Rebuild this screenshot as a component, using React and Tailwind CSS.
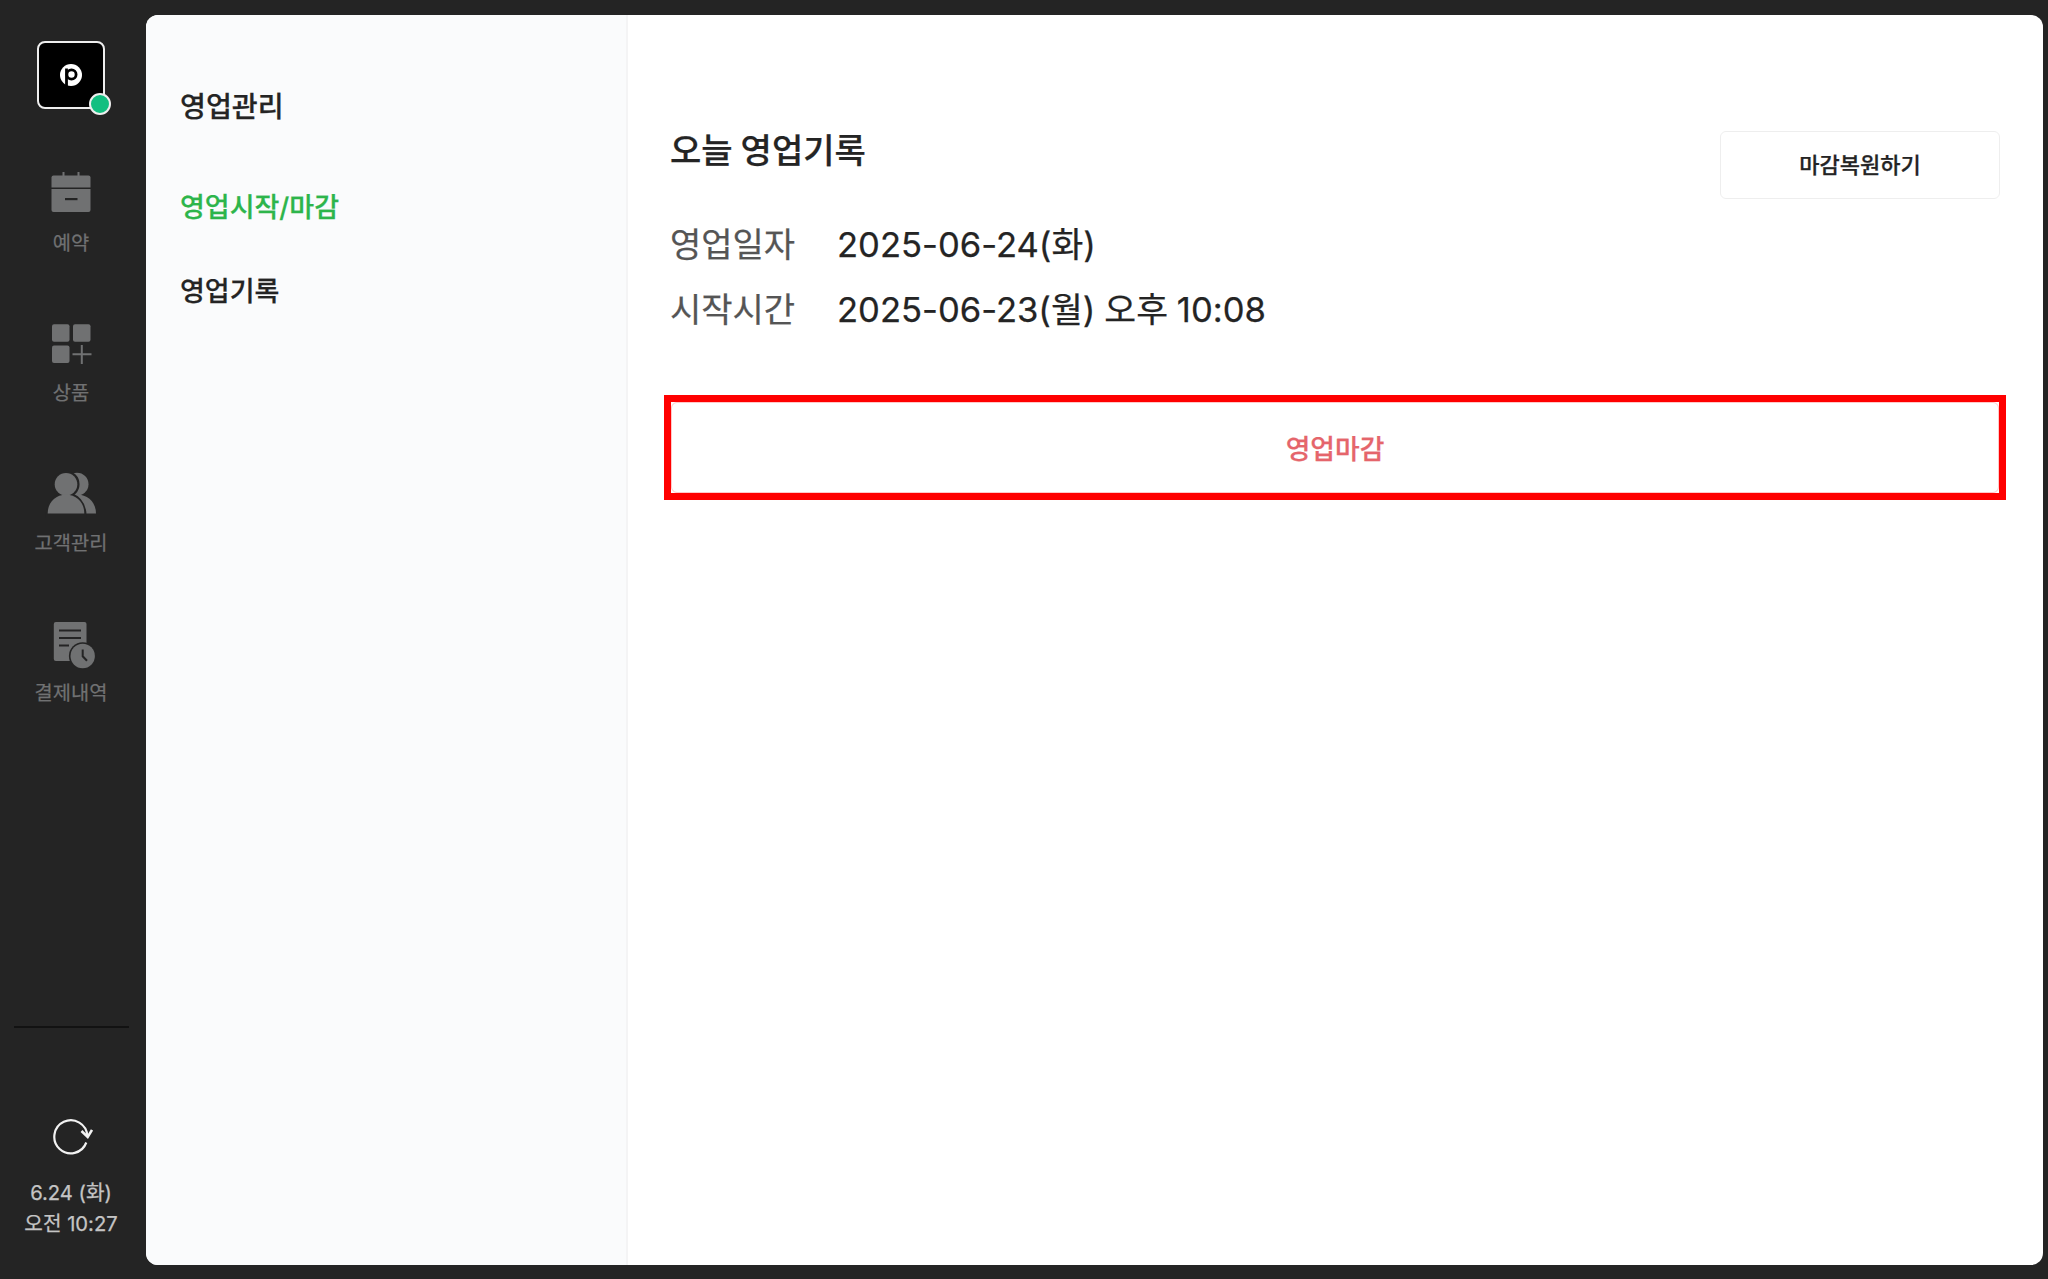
const FONT = "font-[Inter,'Noto_Sans_CJK_KR',sans-serif]";

function CalendarIcon() {
  return (
    <svg width="60" height="50" viewBox="0 0 60 50" fill="#707172">
      <rect x="21.5" y="2" width="2" height="5" />
      <rect x="36.5" y="2" width="2" height="5" />
      <path d="M12.5 5.5h35a2 2 0 0 1 2 2v10h-39v-10a2 2 0 0 1 2-2z" />
      <path d="M10.5 19h39v21a2 2 0 0 1-2 2h-35a2 2 0 0 1-2-2z" />
      <rect x="24" y="28" width="12.5" height="2.2" fill="#242424" />
    </svg>
  );
}

function ProductIcon() {
  return (
    <svg width="60" height="50" viewBox="0 0 60 50" fill="#707172">
      <rect x="11" y="4.3" width="17.5" height="17.5" rx="2" />
      <rect x="32" y="4.3" width="17.5" height="17.5" rx="2" />
      <rect x="11" y="25.5" width="17.5" height="17.5" rx="2" />
      <path d="M40.8 25v19M31.5 34.3h19" stroke="#707172" strokeWidth="2" />
    </svg>
  );
}

function CustomerIcon() {
  return (
    <svg width="60" height="50" viewBox="0 0 60 50" fill="#707172">
      <circle cx="36" cy="14.2" r="11.5" />
      <path d="M17 43.5c0-11 7-19 19-19 11 0 19 8 19 19z" />
      {/* gap between the two people */}
      <g fill="#242424" stroke="#242424" strokeWidth="4.5">
        <circle cx="25" cy="14.2" r="11.3" />
        <path d="M6.7 46c0-13 7.5-21 18.3-21s18.3 8 18.3 21z" />
      </g>
      <circle cx="25" cy="14.2" r="11.3" />
      <path d="M6.7 43.5c0-11 7.5-18.8 18.3-18.8s18.3 7.8 18.3 18.8z" />
    </svg>
  );
}

function ReceiptIcon() {
  return (
    <svg width="60" height="50" viewBox="0 0 60 50" fill="#707172">
      <rect x="12.8" y="2" width="32.7" height="39" rx="2" />
      <path d="M18 10.5h22M18 18h22M18 25.5h10" stroke="#242424" strokeWidth="2" />
      <circle cx="41.7" cy="36" r="13.8" fill="#242424" />
      <circle cx="41.7" cy="36" r="12.2" />
      <path d="M41.7 29.5v6.8l4.3 4.5" fill="none" stroke="#242424" strokeWidth="2" />
    </svg>
  );
}

function RefreshIcon() {
  return (
    <svg width="44" height="40" viewBox="0 0 44 40" fill="none" stroke="#f2f2f2" strokeWidth="2.2">
      <path d="M37.3 26.5a16.5 16.5 0 1 1 1-6.5" />
      <path d="M32.5 15l6.2 6 4.3-7" strokeWidth="2.6" />
    </svg>
  );
}

const navItems = [
  { label: "예약", Icon: CalendarIcon },
  { label: "상품", Icon: ProductIcon },
  { label: "고객관리", Icon: CustomerIcon },
  { label: "결제내역", Icon: ReceiptIcon },
];

const records = [
  { label: "영업일자", value: "2025-06-24(화)" },
  { label: "시작시간", value: "2025-06-23(월) 오후 10:08" },
];

function Rail() {
  return (
    <nav className="w-[142px] shrink-0 flex flex-col items-center">
      <div className="relative mt-[41px] size-[68px] rounded-[8px] border-2 border-[#eeeeee] bg-black flex items-center justify-center">
        <svg width="22" height="22" viewBox="0 0 22 22">
          <circle cx="11" cy="11" r="11" fill="#fff" />
          <circle cx="11.5" cy="10.5" r="4.6" fill="none" stroke="#000" strokeWidth="2.8" />
          <path d="M6.5 4.5v17.5" stroke="#000" strokeWidth="2.8" />
        </svg>
        <span className="absolute -right-[8px] -bottom-[8px] size-[22px] rounded-full border-2 border-[#eeeeee] bg-[#12bf80]" />
      </div>
      <div className="mt-[61px] flex flex-col items-center">
        {navItems.map(({ label, Icon }) => (
          <div key={label} className="h-[150px] flex flex-col items-center">
            <Icon />
            <span className="mt-2 text-[19.8px] leading-[31px] text-[#707172] [-webkit-text-stroke:0.25px]">
              {label}
            </span>
          </div>
        ))}
      </div>
      <div className="mt-auto w-[115px] h-[2px] bg-[#121212]" />
      <div className="mt-[88px] h-[163px] flex flex-col items-center">
        <RefreshIcon />
        <div className="mt-[21px] text-[20.2px] leading-[31px] text-center text-[#c4c4c4] [-webkit-text-stroke:0.25px]">
          <div>6.24 (화)</div>
          <div>오전 10:27</div>
        </div>
      </div>
    </nav>
  );
}

function SideMenu() {
  return (
    <aside className="w-[482px] shrink-0 bg-[#fafbfc] border-r-2 border-[#f4f4f5] pl-[34px] pt-[72px] font-medium text-[#242424] [-webkit-text-stroke:0.25px]">
      <h1 className="text-[28.2px] leading-[40px]">영업관리</h1>
      <ul className="mt-[61px] text-[27px] leading-[40px]">
        <li className="text-[#2db54b]">영업시작/마감</li>
        <li className="mt-[44px]">영업기록</li>
      </ul>
    </aside>
  );
}

export default function App() {
  return (
    <div className={`${FONT} w-[2048px] h-[1279px] bg-[#242424] flex overflow-hidden`}>
      <Rail />
      <div className="ml-1 mt-[15px] w-[1897px] h-[1250px] rounded-[12px] bg-white flex overflow-hidden">
        <SideMenu />
        <main className="flex-1 pl-[36px] pr-[37px] pt-[110px] text-[#242424] [-webkit-text-stroke:0.25px]">
          <div className="h-[270px] flex items-start justify-between px-[6px]">
            <div>
              <h2 className="pt-px text-[34px] leading-[50px] font-medium [word-spacing:-1px]">
                오늘 영업기록
              </h2>
              <dl className="mt-[36px] text-[34px] leading-[65px]">
                {records.map((r) => (
                  <div key={r.label} className="flex">
                    <dt className="w-[167px] text-[#555555]">{r.label}</dt>
                    <dd className="text-[34.6px] [word-spacing:-0.8px]">{r.value}</dd>
                  </div>
                ))}
              </dl>
            </div>
            <button className="mt-[6px] w-[280px] h-[68px] rounded-[6px] border border-[#eeeeee] text-[22px] font-medium">
              마감복원하기
            </button>
          </div>
          <div className="h-[105px] border-[7px] border-[#ff0000]">
            <button className="w-full h-full pt-[3px] rounded-[6px] border border-[#ffc9c9] text-[26.8px] font-medium text-[#e5656b]">
              영업마감
            </button>
          </div>
        </main>
      </div>
    </div>
  );
}
